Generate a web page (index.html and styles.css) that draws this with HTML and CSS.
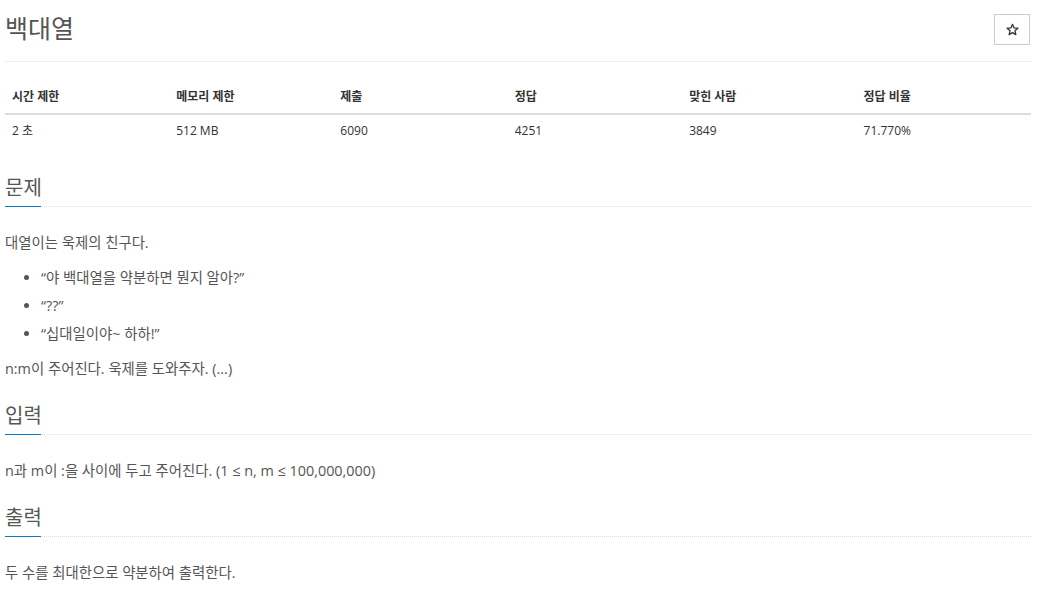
FILE: index.html
```html
<!DOCTYPE html>
<html lang="ko">
<head>
<meta charset="utf-8">
<link rel="stylesheet" href="styles.css">
</head>
<body>
<div class="page">
  <div class="page-header">
    <h1 class="title">백대열</h1>
    <button class="star-btn" type="button" aria-label="즐겨찾기">
      <svg width="13" height="13" viewBox="0 0 24 24"><path d="M12 2.5l2.9 6.6 7.1.6-5.4 4.7 1.6 7-6.2-3.7-6.2 3.7 1.6-7L2 9.7l7.1-.6z" fill="none" stroke="#333" stroke-width="2.4" stroke-linejoin="round"/></svg>
    </button>
  </div>
  <table class="info">
    <thead>
      <tr>
        <th class="w16">시간 제한</th>
        <th class="w16">메모리 제한</th>
        <th class="w17">제출</th>
        <th class="w17">정답</th>
        <th class="w17">맞힌 사람</th>
        <th class="w17">정답 비율</th>
      </tr>
    </thead>
    <tbody>
      <tr>
        <td>2 초</td>
        <td>512 MB</td>
        <td>6090</td>
        <td>4251</td>
        <td>3849</td>
        <td>71.770%</td>
      </tr>
    </tbody>
  </table>

  <section class="section">
    <div class="headline"><h2>문제</h2></div>
    <div class="text">
      <p>대열이는 욱제의 친구다.</p>
      <ul>
        <li>“야 백대열을 약분하면 뭔지 알아?”</li>
        <li>“??”</li>
        <li>“십대일이야~ 하하!”</li>
      </ul>
      <p>n:m이 주어진다. 욱제를 도와주자. (...)</p>
    </div>
  </section>

  <section class="section">
    <div class="headline"><h2>입력</h2></div>
    <div class="text">
      <p>n과 m이 :을 사이에 두고 주어진다. (1 ≤ n, m ≤ 100,000,000)</p>
    </div>
  </section>

  <section class="section">
    <div class="headline"><h2>출력</h2></div>
    <div class="text">
      <p>두 수를 최대한으로 약분하여 출력한다.</p>
    </div>
  </section>
</div>
</body>
</html>
```

FILE: styles.css
```css
html, body {
  margin: 0;
  padding: 0;
  background: #fff;
}
body {
  font-family: "Open Sans", "Noto Sans CJK KR", sans-serif;
  color: #555;
  font-size: 14px;
}
.page {
  width: 1026px;
  padding-left: 5px;
}
.page-header {
  display: flex;
  justify-content: space-between;
  align-items: flex-start;
  border-bottom: 1px solid #eee;
  height: 62px;
  box-sizing: border-box;
}
.title {
  margin: 0;
  padding-top: 11px;
  font-size: 25px;
  font-weight: 400;
  line-height: 34px;
  color: #555;
}
.star-btn {
  margin-top: 14px;
  margin-right: 1px;
  width: 36px;
  height: 31px;
  border: 1px solid #ccc;
  background: #fff;
  padding: 0;
  display: flex;
  align-items: center;
  justify-content: center;
}
.info {
  width: 100%;
  border-collapse: collapse;
  margin-top: 18px;
  margin-bottom: 26px;
  font-size: 12px;
  color: #333;
}
.w16 { width: 16%; }
.w17 { width: 17%; }
.info th {
  text-align: left;
  font-weight: 700;
  padding: 8px 7px;
  line-height: 17px;
  border-bottom: 2px solid #ddd;
}
.info td {
  text-align: left;
  padding: 7px 7px 8px;
  line-height: 17px;
}
.section {
  margin-top: 22px;
}
.headline {
  border-bottom: 1px dotted #ddd;
  display: flex;
}
.headline h2 {
  margin: 0;
  font-size: 20px;
  font-weight: 400;
  line-height: 28px;
  padding-top: 1px;
  padding-bottom: 4px;
  margin-bottom: -1px;
  color: #555;
  border-bottom: 1px solid #0a7bc9;
  width: 36px;
  white-space: nowrap;
}
.text {
  padding-top: 26px;
  line-height: 20px;
  font-size: 14.4px;
}
.text p {
  margin: 0 0 15px;
}
.text ul {
  margin: 0 0 15px;
  padding-left: 36px;
}
.text li {
  margin-bottom: 0;
  line-height: 20px;
}
.text li + li {
  margin-top: 8px;
}
```
